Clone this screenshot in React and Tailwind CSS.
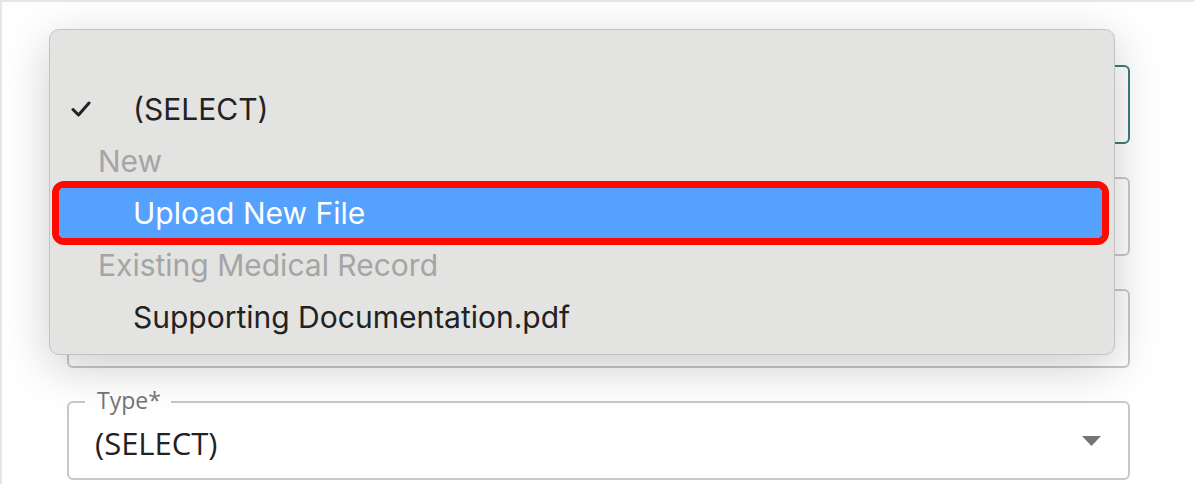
import React from "react";

const menuFont = { fontFamily: "Inter, 'Liberation Sans', sans-serif" };
const fieldFont = { fontFamily: "'Open Sans', 'Noto Sans', sans-serif" };

function Field({ focused, label, value, arrow }) {
  return (
    <div
      className={`relative h-[79px] w-[1063px] rounded-[6px] border-2 bg-white ${
        focused ? "border-[#3f7c7a]" : "border-[#c8c8c8]"
      }`}
      style={fieldFont}
    >
      {label && (
        <span className="absolute left-[16px] top-[-18px] bg-white pl-[12px] pr-[10px] text-[23px] leading-[30px] text-[#757575]">
          {label}
        </span>
      )}
      {value && (
        <div className="flex h-full items-center pl-[26px] pt-[5px] text-[31px] text-[#222]">{value}</div>
      )}
      {arrow && (
        <svg className="absolute right-[27px] top-[33px]" width="19" height="10" viewBox="0 0 19 10">
          <path d="M0 0 L19 0 L9.5 10 Z" fill="#757575" />
        </svg>
      )}
    </div>
  );
}

function Item({ children, kind, check }) {
  if (kind === "header") {
    return (
      <div className="flex h-[52px] items-center pl-[48px] text-[30px] text-[#a5a5a5]">{children}</div>
    );
  }
  if (kind === "active") {
    return (
      <div className="flex h-[52px] items-center pl-[2px] pr-[5px]">
        <div className="flex h-[64px] w-full items-center rounded-[12px] border-[7px] border-[#fe0a00]">
          <div className="flex h-full w-full items-center rounded-[5px] bg-[#54a1fe] pl-[74px] text-[30px] text-white">
            {children}
          </div>
        </div>
      </div>
    );
  }
  return (
    <div className="flex h-[52px] items-center text-[30px] text-[#222]">
      <span className="flex w-[83px] justify-start pl-[21px]">
        {check && (
          <svg width="20" height="16" viewBox="0 0 20 16">
            <path d="M2 8.5 L7.5 14 L18 2" fill="none" stroke="#222" strokeWidth="3" strokeLinecap="round" strokeLinejoin="round" />
          </svg>
        )}
      </span>
      <span>{children}</span>
    </div>
  );
}

export default function App() {
  return (
    <div className="h-[484px] w-[1194px] overflow-hidden border-l-2 border-t-2 border-[#e6e6e6] bg-white">
      <div className="relative h-full w-full">
        <div className="flex flex-col gap-[33px] pl-[65px] pt-[63px]">
          <Field focused />
          <Field />
          <Field />
          <Field label="Type*" value="(SELECT)" arrow />
        </div>

        <div
          className="absolute left-[47px] top-[27px] h-[326px] w-[1066px] rounded-[10px] border border-[#c2c2c2] bg-[#e3e3e1] pb-[12px] pt-[53px] shadow-[0_12px_48px_rgba(0,0,0,0.2)]"
          style={menuFont}
        >
          <Item check>(SELECT)</Item>
          <Item kind="header">New</Item>
          <Item kind="active">Upload New File</Item>
          <Item kind="header">Existing Medical Record</Item>
          <Item>Supporting Documentation.pdf</Item>
        </div>
      </div>
    </div>
  );
}
